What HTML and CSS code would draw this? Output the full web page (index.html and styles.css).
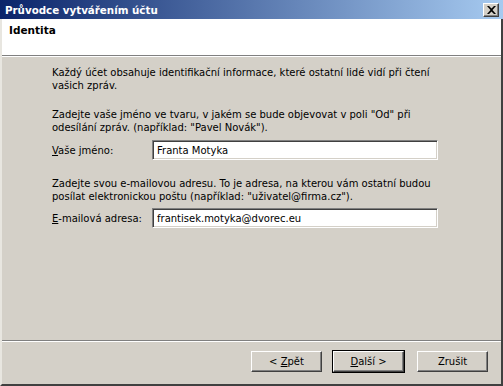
FILE: index.html
```html
<!DOCTYPE html>
<html lang="cs">
<head>
    <meta charset="UTF-8">
    <title>Průvodce vytvářením účtu</title>
    <link rel="stylesheet" href="styles.css">
</head>
<body>
    <div class="window">
        <div class="titlebar">
            <span class="title">Průvodce vytvářením účtu</span>
            <span class="close-btn">
                <svg width="9" height="8" viewBox="0 0 9 8"><path d="M0 0h2l2.5 2.5L7 0h2L5.5 4 9 8H7L4.5 5.5 2 8H0l3.5-4z" fill="#000"/></svg>
            </span>
        </div>
        <div class="header">
            <h2>Identita</h2>
        </div>
        <div class="content">
            <p>Každý účet obsahuje identifikační informace, které ostatní lidé vidí při čtení<br>vašich zpráv.</p>
            <p class="gap">Zadejte vaše jméno ve tvaru, v jakém se bude objevovat v poli "Od" při<br>odesílání zpráv. (například: "Pavel Novák").</p>
            <div class="field">
                <label for="name"><u>V</u>aše jméno:</label>
                <input id="name" type="text" value="Franta Motyka">
            </div>
            <p class="gap2">Zadejte svou e-mailovou adresu. To je adresa, na kterou vám ostatní budou<br>posílat elektronickou poštu (například: "uživatel@firma.cz").</p>
            <div class="field second">
                <label for="email"><u>E</u>-mailová adresa:</label>
                <input id="email" type="text" value="frantisek.motyka@dvorec.eu">
            </div>
        </div>
        <div class="footer">
            <button class="btn">&lt; <u>Z</u>pět</button>
            <button class="btn default"><u>D</u>alší &gt;</button>
            <button class="btn cancel">Zrušit</button>
        </div>
    </div>
</body>
</html>
```

FILE: styles.css
```css
:root {
    --face: #d4d0c8; --shadow: #808080; --dark: #404040; --light: #ffffff;
}
html, body { margin: 0; padding: 0; }
body { width: 503px; height: 386px; overflow: hidden; font-family: 'DejaVu Sans', sans-serif; font-size: 10px; color: #000; background: var(--face); }
.window { height: 386px; box-sizing: border-box; display: flex; flex-direction: column; border-left: 2px solid #e8e6e0; border-right: 2px solid var(--dark); border-bottom: 2px solid var(--dark); }
.titlebar { height: 19px; margin-left: -2px; margin-right: -2px; padding: 1px 4px 0 5px; box-sizing: border-box; display: flex; align-items: center; justify-content: space-between; background: linear-gradient(to right, #0a246a, #a6caf0); }
.title { color: #fff; font-weight: bold; font-size: 10.3px; }
.close-btn { width: 16px; height: 14px; box-sizing: border-box; display: flex; align-items: center; justify-content: center; background: var(--face); border: 1px solid; border-color: var(--light) var(--dark) var(--dark) var(--light); box-shadow: inset -1px -1px 0 var(--shadow); }
.header { height: 36px; background: #fff; border-bottom: 1px solid var(--shadow); box-shadow: 0 1px 0 var(--light); }
.header h2 { margin: 0; padding: 5px 0 0 7px; font-size: 10.5px; font-weight: bold; }
.content { flex: 1; padding: 10px 0 0 50px; }
.content p { margin: 0; line-height: 13px; white-space: nowrap; }
.content .gap { margin-top: 16px; }
.content .gap2 { margin-top: 17px; }
.field { display: flex; align-items: center; margin-top: 6px; }
.field.second { margin-top: 5px; }
.field label { width: 100px; }
.field input { width: 286px; height: 20px; box-sizing: border-box; padding: 0 4px; font-family: inherit; font-size: 10px; background: #fff; border: 1px solid; border-color: var(--shadow) var(--light) var(--light) var(--shadow); box-shadow: inset 1px 1px 0 var(--dark), inset -1px -1px 0 var(--face); outline: none; }
.footer { height: 41px; border-top: 1px solid var(--shadow); box-shadow: inset 0 1px 0 var(--light); display: flex; align-items: center; padding-left: 249px; padding-bottom: 2px; }
.btn { width: 71px; height: 21px; margin-right: 11px; font-family: inherit; font-size: 10px; color: #000; background: var(--face); border: 1px solid; border-color: var(--light) var(--dark) var(--dark) var(--light); box-shadow: inset -1px -1px 0 var(--shadow); padding: 0; }
.btn.default { outline: 1px solid #000; }
.btn.cancel { margin-left: 2px; }
```
